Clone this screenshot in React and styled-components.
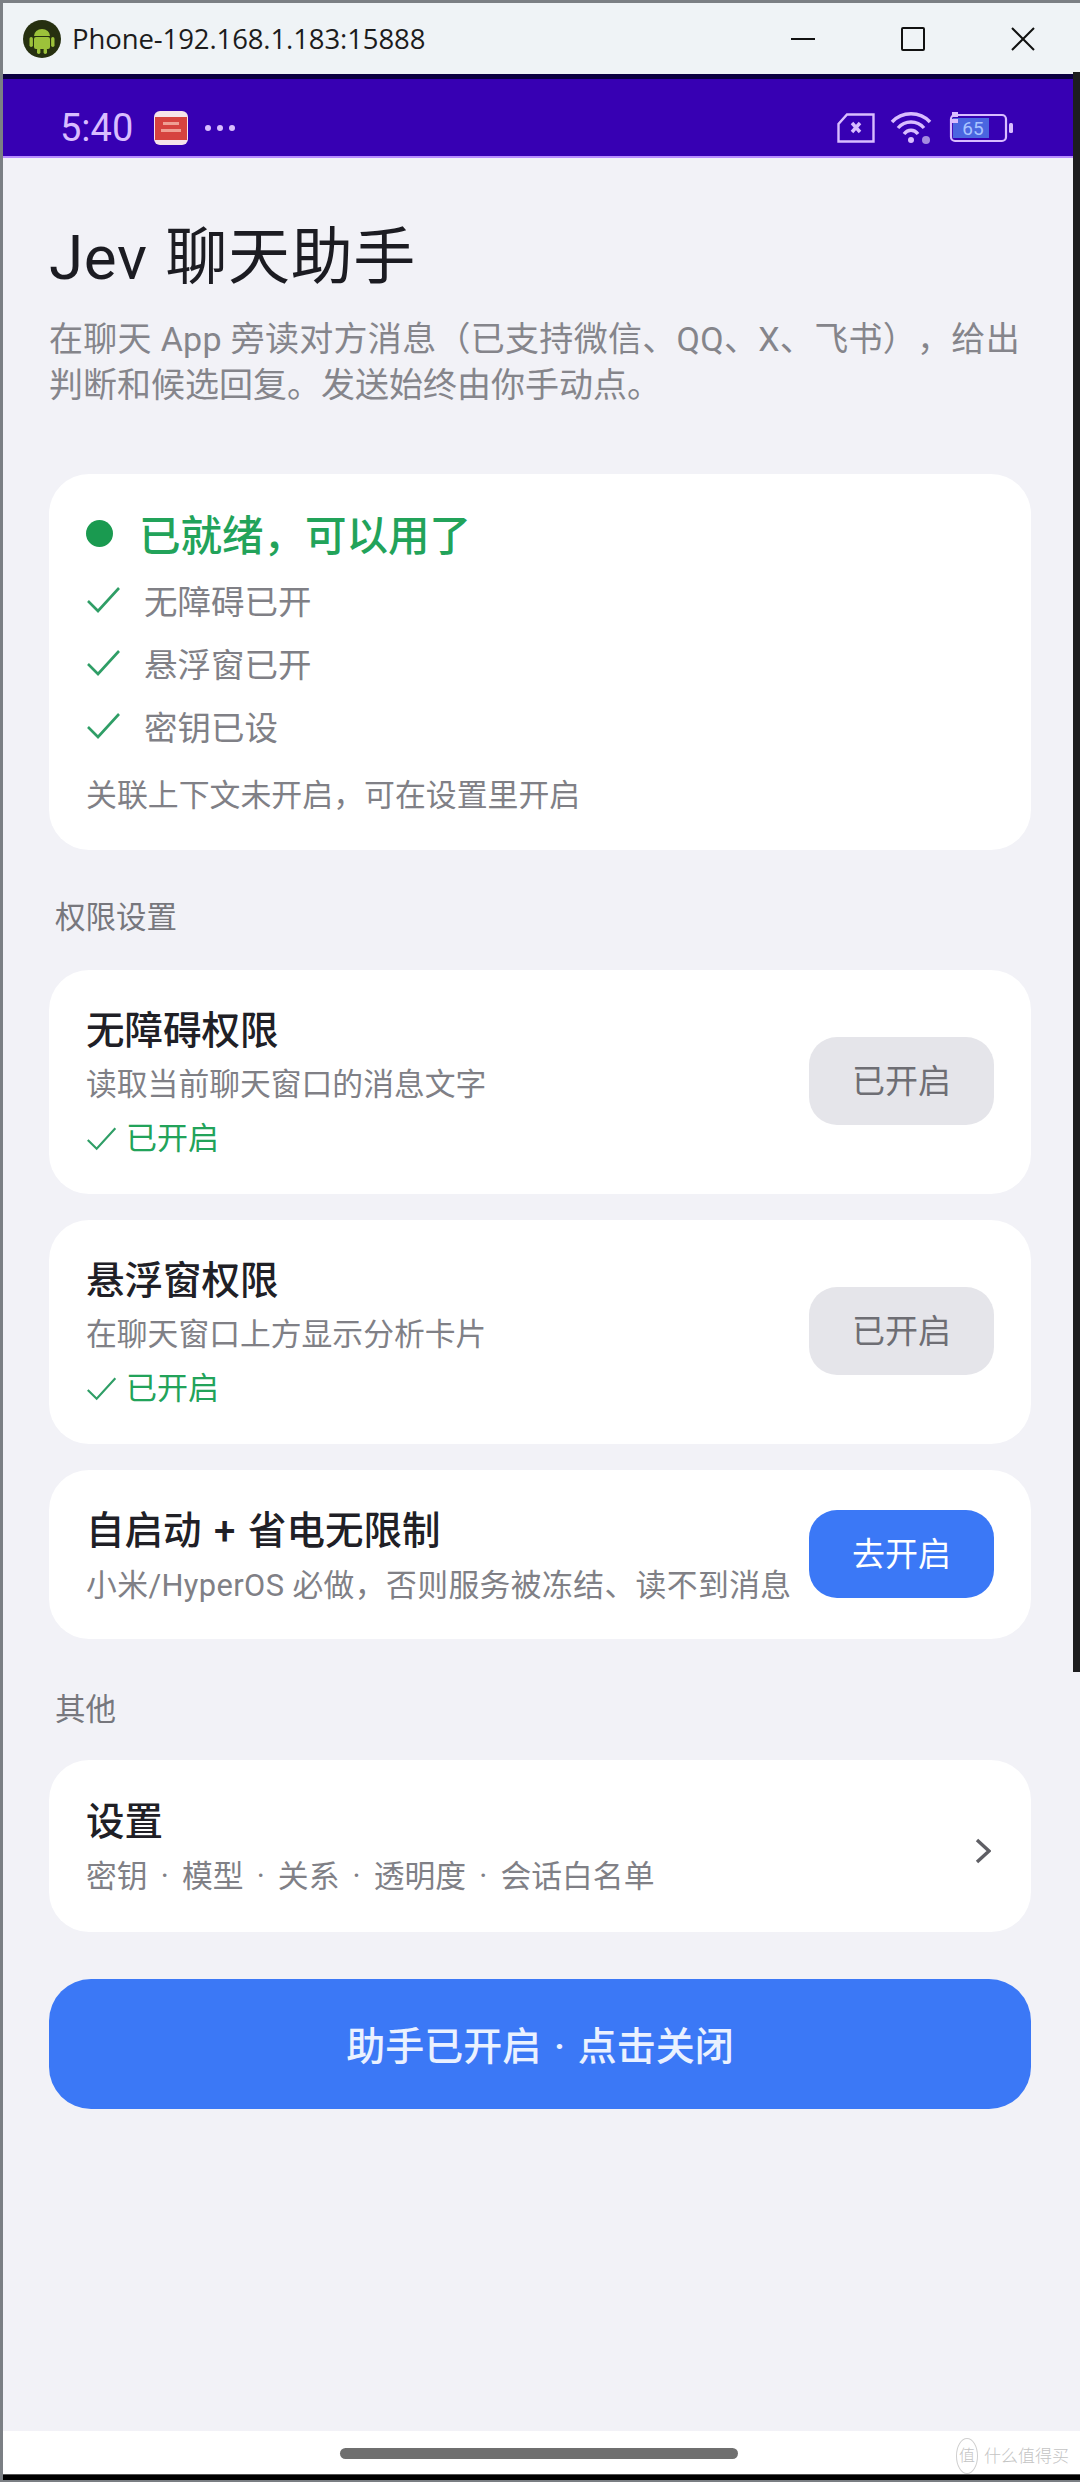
import React from "react";
import styled, { createGlobalStyle } from "styled-components";

const GlobalStyle = createGlobalStyle`
  html, body {
    margin: 0;
    padding: 0;
    background: #7b7f84;
  }
  * {
    box-sizing: border-box;
  }
`;

const FONT = `Roboto, "Noto Sans CJK SC", "Noto Sans", sans-serif`;

const Window = styled.div`
  position: relative;
  width: 1080px;
  height: 2482px;
  display: flex;
  flex-direction: column;
  padding: 3px 0 2px 3px;
  background: #7b7f84;
  font-family: ${FONT};
  text-spacing-trim: space-all;
  overflow: hidden;
`;

const RightEdge = styled.div`
  position: absolute;
  top: 72px;
  right: 0;
  width: 7px;
  height: 1600px;
  background: #1d1d1f;
`;

const TitleBar = styled.div`
  height: 71px;
  flex: none;
  display: flex;
  align-items: center;
  padding: 0 0 0 19px;
  background: #eff3f6;
`;

const WindowName = styled.div`
  margin-left: 10px;
  font-family: "Open Sans", "Noto Sans", sans-serif;
  font-size: 27.5px;
  color: #1c1c1c;
  letter-spacing: -0.1px;
  flex: 1;
`;

const WindowButtons = styled.div`
  display: flex;
  align-items: center;
  gap: 86px;
  padding-right: 45px;
  color: #111;
`;

const StatusBar = styled.div`
  height: 84px;
  flex: none;
  display: flex;
  align-items: center;
  padding: 21px 0 0 57px;
  background: #3700b3;
  border-top: 5px solid #0c0040;
  border-bottom: 2px solid #b98cff;
  color: #d9bdff;
`;

const Clock = styled.div`
  font-family: Roboto, sans-serif;
  font-size: 38px;
  width: 94px;
`;

const Dots = styled.div`
  display: flex;
  gap: 6px;
  margin-left: 17px;
  flex: 1;
`;

const Dot = styled.span`
  width: 6px;
  height: 6px;
  background: #d9bdff;
  border-radius: 50%;
`;

const StatusIcons = styled.div`
  display: flex;
  align-items: center;
  gap: 15px;
  padding-right: 66px;
`;

const Screen = styled.div`
  flex: 1;
  display: flex;
  flex-direction: column;
  padding: 60px 49px 0 46px;
  background: #f2f2f7;
`;

const Title = styled.h1`
  margin: 0;
  font-size: 62px;
  line-height: 80px;
  font-weight: 400;
  letter-spacing: 0.6px;
  word-spacing: 2px;
  color: #1c1c22;
`;

const Intro = styled.p`
  margin: 18px 0 66px;
  font-size: 34px;
  line-height: 46px;
  color: #85858b;
  white-space: nowrap;
`;

const IntroLine = styled.span`
  display: block;
  letter-spacing: ${(p) => p.$track || 0}px;
`;

const Card = styled.div`
  display: flex;
  align-items: center;
  justify-content: space-between;
  min-height: ${(p) => p.$height}px;
  margin-bottom: 26px;
  padding: 0 37px;
  border-radius: 40px;
  background: #fff;
`;

const StatusCard = styled.div`
  height: 376px;
  padding: 31px 37px 0;
  border-radius: 40px;
  background: #fff;
`;

const StatusHead = styled.div`
  display: flex;
  align-items: center;
  height: 56px;
  margin-bottom: 7px;
  font-size: 41.5px;
  font-weight: 500;
  color: #22a35a;
`;

const StatusDot = styled.span`
  width: 27px;
  height: 27px;
  margin-right: 26px;
  border-radius: 50%;
  background: #1a9a50;
`;

const CheckRow = styled.div`
  display: flex;
  align-items: center;
  height: 63px;
  font-size: 33.5px;
  color: #808086;
`;

const CheckIcon = styled.svg`
  flex: none;
  margin-right: ${(p) => p.$gap}px;
  fill: none;
  stroke: #2f9e66;
  stroke-width: ${(p) => p.$weight};
`;

const Note = styled.div`
  margin-top: 17px;
  font-size: 30.9px;
  line-height: 44px;
  color: #808086;
`;

const SectionLabel = styled.div`
  margin: ${(p) => p.$top}px 0 ${(p) => p.$bottom}px 6px;
  font-size: 30.5px;
  line-height: 44px;
  color: #77777d;
`;

const CardText = styled.div`
  display: flex;
  flex-direction: column;
  padding-top: 6px;
`;

const CardTitle = styled.div`
  font-size: 38.5px;
  line-height: ${(p) => p.$line}px;
  font-weight: 500;
  word-spacing: 3px;
  color: #202026;
`;

const CardSub = styled.div`
  font-size: 30.8px;
  line-height: 54px;
  letter-spacing: ${(p) => p.$track || 0}px;
  word-spacing: ${(p) => p.$words || 0}px;
  color: #808086;
  white-space: nowrap;
`;

const Granted = styled.div`
  display: flex;
  align-items: center;
  font-size: 31px;
  line-height: 54px;
  color: #22a35a;
`;

const ActionButton = styled.div`
  flex: none;
  width: 185px;
  height: 88px;
  margin-bottom: ${(p) => (p.$primary ? 1 : 3)}px;
  display: flex;
  align-items: center;
  justify-content: center;
  padding-bottom: 4px;
  border-radius: 28px;
  font-size: 33px;
  background: ${(p) => (p.$primary ? "#3b78f6" : "#e5e5ea")};
  color: ${(p) => (p.$primary ? "#fff" : "#6e6e74")};
`;

const MainButton = styled.div`
  height: 130px;
  margin-top: 21px;
  display: flex;
  align-items: center;
  justify-content: center;
  padding-bottom: 2px;
  border-radius: 42px;
  background: #3b78f6;
  color: #eaf1ff;
  font-size: 39px;
  font-weight: 500;
  word-spacing: 3px;
`;

const NavBar = styled.div`
  position: relative;
  height: 43px;
  flex: none;
  display: flex;
  justify-content: center;
  padding-top: 17px;
  background: #fff;
`;

const NavPill = styled.div`
  width: 398px;
  height: 11px;
  margin-right: 6px;
  border-radius: 6px;
  background: #6f6f6f;
`;

const BottomEdge = styled.div`
  height: 6px;
  flex: none;
  border-top: 1px solid #555;
  background: #000;
`;

const Watermark = styled.div`
  position: absolute;
  right: 11px;
  bottom: 0;
  display: flex;
  align-items: center;
  gap: 6px;
  font-size: 17px;
  font-weight: 300;
  line-height: 24px;
  color: #c4c4c4;
`;

const WatermarkBadge = styled.span`
  width: 22px;
  height: 36px;
  display: flex;
  align-items: center;
  justify-content: center;
  border: 1px solid #cfcfcf;
  border-radius: 50%;
  font-size: 16px;
`;

const SettingsArrow = styled.svg`
  flex: none;
  margin: 10px 3px 0 0;
  fill: none;
  stroke: #5f5f65;
  stroke-width: 3.4;
`;

const Check = ({ size = 36, gap = 22, weight = 2.6 }) => (
  <CheckIcon width={size} height={size} viewBox="0 0 36 36" $gap={gap} $weight={weight}>
    <path d="M2 19 L12 29 L33 6" />
  </CheckIcon>
);

const AndroidLogo = () => (
  <svg width="40" height="40" viewBox="0 0 40 40">
    <circle cx="20" cy="20" r="19" fill="#263010" />
    <path d="M12 17a8 7 0 0 1 16 0z" fill="#9cc23a" />
    <rect x="12" y="18" width="16" height="12" rx="2" fill="#9cc23a" />
    <rect x="7.5" y="18" width="3.4" height="10" rx="1.7" fill="#9cc23a" />
    <rect x="29.1" y="18" width="3.4" height="10" rx="1.7" fill="#9cc23a" />
    <rect x="15" y="29" width="3.4" height="6" rx="1.7" fill="#9cc23a" />
    <rect x="21.6" y="29" width="3.4" height="6" rx="1.7" fill="#9cc23a" />
  </svg>
);

const CalendarIcon = () => (
  <svg width="34" height="34" viewBox="0 0 34 34">
    <rect x="0" y="0" width="34" height="34" rx="6" fill="#f6e4ea" />
    <rect x="1" y="6" width="32" height="23" fill="#d6433f" />
    <rect x="9" y="11" width="16" height="3" fill="#ef9f93" />
    <rect x="7" y="18" width="20" height="3" fill="#ef9f93" />
  </svg>
);

const SimIcon = () => (
  <svg width="38" height="30" viewBox="0 0 38 30" fill="none" stroke="#d9bdff" strokeWidth="2.4">
    <path d="M10 1.5 H36.5 V28.5 H1.5 V11 Z" />
    <path d="M15 10 L23 19 M23 10 L15 19" strokeWidth="3.4" />
  </svg>
);

const WifiIcon = () => (
  <svg width="44" height="34" viewBox="0 0 44 34" fill="none" stroke="#d9bdff" strokeWidth="3.4">
    <path d="M2 11 C12 0 30 0 40 11" />
    <path d="M8 17 C15 9 27 9 34 17" />
    <path d="M14 23 C18 18 24 18 28 23" />
    <circle cx="21" cy="29" r="3" fill="#d9bdff" stroke="none" />
    <circle cx="36" cy="29" r="4" fill="#a58be0" stroke="none" />
  </svg>
);

const BatteryIcon = () => (
  <svg width="65" height="34" viewBox="0 0 65 34">
    <rect x="2" y="4" width="55" height="26" rx="4" fill="none" stroke="#d9bdff" strokeWidth="2.2" />
    <rect x="4" y="7" width="36" height="20" fill="#4a66e0" />
    <rect x="60" y="12" width="4" height="10" rx="1.5" fill="#d9bdff" />
    <text x="24" y="24" fontFamily="Roboto, sans-serif" fontSize="19" fill="#a9c4ff" textAnchor="middle">65</text>
    <path d="M3 1h6v5H3zM3 8h6v4H3z" fill="#d9bdff" />
  </svg>
);

const Chevron = () => (
  <SettingsArrow width="16" height="26" viewBox="0 0 16 26">
    <path d="M2 2 L14 13 L2 24" />
  </SettingsArrow>
);

const permissions = [
  { title: "无障碍权限", sub: "读取当前聊天窗口的消息文字" },
  { title: "悬浮窗权限", sub: "在聊天窗口上方显示分析卡片" },
];

export default function App() {
  return (
    <Window>
      <GlobalStyle />
      <TitleBar>
        <AndroidLogo />
        <WindowName>Phone-192.168.1.183:15888</WindowName>
        <WindowButtons>
          <svg width="24" height="24" viewBox="0 0 24 24" stroke="currentColor" strokeWidth="2">
            <path d="M0 12 H24" />
          </svg>
          <svg width="24" height="24" viewBox="0 0 24 24" fill="none" stroke="currentColor" strokeWidth="2">
            <rect x="1" y="1" width="22" height="22" rx="1" />
          </svg>
          <svg width="24" height="24" viewBox="0 0 24 24" stroke="currentColor" strokeWidth="2">
            <path d="M1 1 L23 23 M23 1 L1 23" />
          </svg>
        </WindowButtons>
      </TitleBar>
      <StatusBar>
        <Clock>5:40</Clock>
        <CalendarIcon />
        <Dots>
          <Dot />
          <Dot />
          <Dot />
        </Dots>
        <StatusIcons>
          <SimIcon />
          <WifiIcon />
          <BatteryIcon />
        </StatusIcons>
      </StatusBar>
      <Screen>
        <Title>Jev 聊天助手</Title>
        <Intro>
          <IntroLine $track={0.3}>在聊天 App 旁读对方消息（已支持微信、QQ、X、飞书），给出</IntroLine>
          <IntroLine>判断和候选回复。发送始终由你手动点。</IntroLine>
        </Intro>

        <StatusCard>
          <StatusHead>
            <StatusDot />
            已就绪，可以用了
          </StatusHead>
          {["无障碍已开", "悬浮窗已开", "密钥已设"].map((item) => (
            <CheckRow key={item}>
              <Check />
              {item}
            </CheckRow>
          ))}
          <Note>关联上下文未开启，可在设置里开启</Note>
        </StatusCard>

        <SectionLabel $top={46} $bottom={30}>权限设置</SectionLabel>

        {permissions.map((item) => (
          <Card key={item.title} $height={224}>
            <CardText>
              <CardTitle $line={54}>{item.title}</CardTitle>
              <CardSub>{item.sub}</CardSub>
              <Granted>
                <Check size={32} gap={8} weight={2.4} />
                已开启
              </Granted>
            </CardText>
            <ActionButton>已开启</ActionButton>
          </Card>
        ))}

        <Card $height={169}>
          <CardText>
            <CardTitle $line={57}>自启动 + 省电无限制</CardTitle>
            <CardSub $track={0.4}>小米/HyperOS 必做，否则服务被冻结、读不到消息</CardSub>
          </CardText>
          <ActionButton $primary>去开启</ActionButton>
        </Card>

        <SectionLabel $top={23} $bottom={28}>其他</SectionLabel>

        <Card $height={172}>
          <CardText>
            <CardTitle $line={56}>设置</CardTitle>
            <CardSub $words={5.5}>密钥 · 模型 · 关系 · 透明度 · 会话白名单</CardSub>
          </CardText>
          <Chevron />
        </Card>

        <MainButton>助手已开启 · 点击关闭</MainButton>
      </Screen>
      <NavBar>
        <NavPill />
        <Watermark>
          <WatermarkBadge>值</WatermarkBadge>
          什么值得买
        </Watermark>
      </NavBar>
      <BottomEdge />
      <RightEdge />
    </Window>
  );
}
